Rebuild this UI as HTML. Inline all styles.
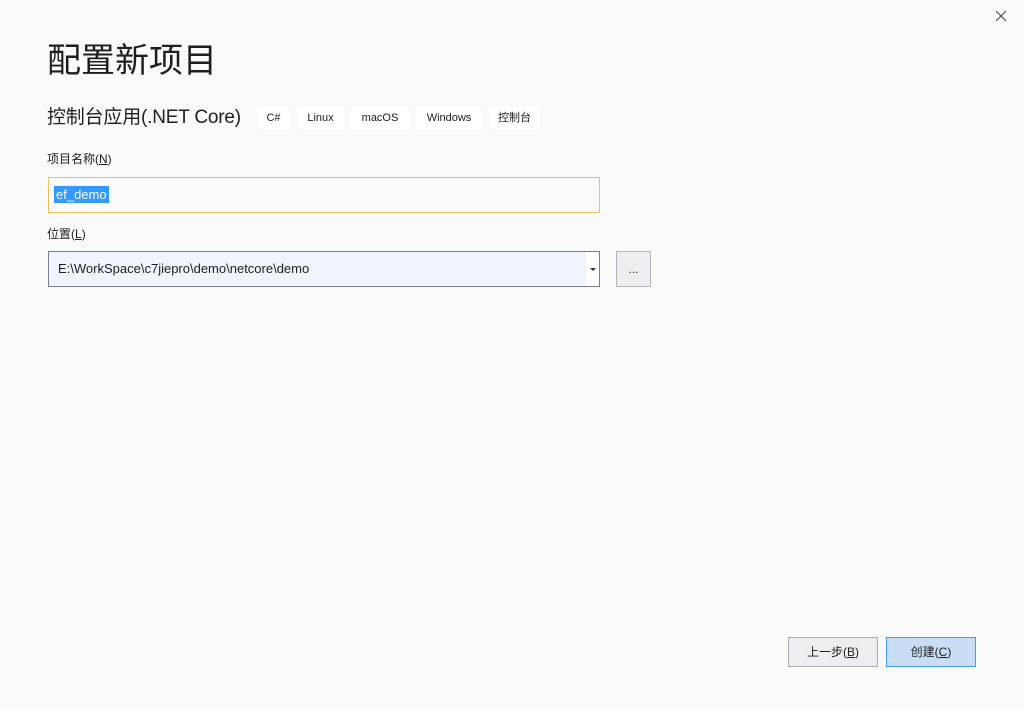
<!DOCTYPE html>
<html><head><meta charset="utf-8"><style>
body{margin:0;width:1024px;height:710px;background:#fafafb;font-family:"Liberation Sans","Noto Sans CJK SC",sans-serif;color:#1e1e1e;position:relative;overflow:hidden}
.a{position:absolute}
.tag{position:absolute;top:107px;height:22px;background:#fff;border-radius:3px;font-size:11px;line-height:22px;text-align:center}
</style></head><body>
<svg class="a" style="left:995px;top:10px" width="12" height="12"><path d="M1 1L11 11M11 1L1 11" stroke="#444" stroke-width="1.1"/></svg>
<div class="a" style="left:47px;top:38px;font-size:34px;line-height:46px">配置新项目</div>
<div class="a" style="left:47px;top:104px;font-size:19px;line-height:28px;letter-spacing:-0.2px">控制台应用(.NET Core)</div>
<div class="tag" style="left:257px;width:33px">C#</div>
<div class="tag" style="left:297px;width:47px">Linux</div>
<div class="tag" style="left:350px;width:60px">macOS</div>
<div class="tag" style="left:416px;width:66px">Windows</div>
<div class="tag" style="left:489px;width:51px">控制台</div>
<div class="a" style="left:47px;top:150px;font-size:12px">项目名称(<u>N</u>)</div>
<div class="a" style="left:48px;top:177px;width:550px;height:34px;border:1px solid #e8c15a;background:#fafafb"></div>
<div class="a" style="left:54px;top:186px;height:17px;background:#3399ff;color:#fff;font-size:13px;line-height:17px;padding:0 2px">ef_demo</div>
<div class="a" style="left:47px;top:225px;font-size:12px">位置(<u>L</u>)</div>
<div class="a" style="left:48px;top:251px;width:550px;height:34px;border:1px solid #7a7d8c;background:#f0f4fc"></div>
<div class="a" style="left:586px;top:252px;width:13px;height:34px;background:#fff"></div>
<div class="a" style="left:590px;top:268px;width:0;height:0;border-left:3px solid transparent;border-right:3px solid transparent;border-top:3px solid #333"></div>
<div class="a" style="left:58px;top:260px;font-size:13px;line-height:17px">E:\WorkSpace\c7jiepro\demo\netcore\demo</div>
<div class="a" style="left:616px;top:251px;width:33px;height:34px;border:1px solid #b4b4b4;background:#ededf2;font-size:12px;text-align:center;line-height:34px">...</div>
<div class="a" style="left:788px;top:637px;width:88px;height:28px;border:1px solid #adadad;background:#ededf2;font-size:12px;text-align:center;line-height:28px">上一步(<u>B</u>)</div>
<div class="a" style="left:886px;top:637px;width:88px;height:28px;border:1px solid #3f9cf5;background:#c9def5;font-size:12px;text-align:center;line-height:28px">创建(<u>C</u>)</div>
</body></html>
